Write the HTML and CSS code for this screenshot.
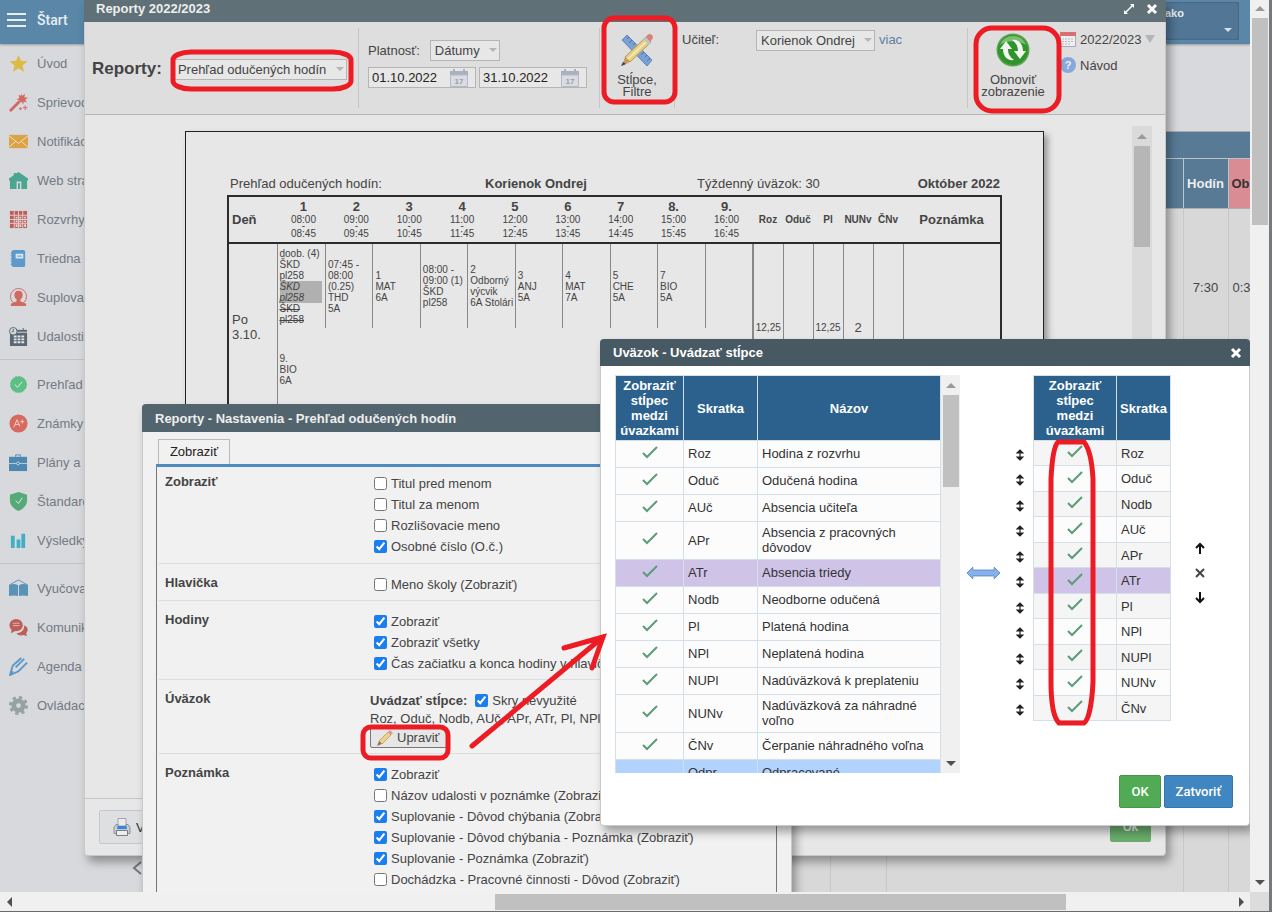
FILE: index.html
```
<!DOCTYPE html>
<html lang="sk">

<head>
	<meta charset="UTF-8">
	<title>Reporty 2022/2023</title>

	<link rel="stylesheet" href="styles.css">
</head>

<body>

	<div class="screen">
		<div class="app">
			<header class="topbar">
				<button class="start"><span class="burger"><i></i><i></i><i></i></span>Štart</button>
				<div class="user">ako<span class="caret"></span></div>
			</header>

			<div class="page">
				<nav class="menu">
					<ul>
						<li><a href="#"><svg viewBox="0 0 20 20"><path fill="#dcba45" d="M10 1l2.600 6.200 6.700.5-5.100 4.300 1.600 6.600-5.800-3.600-5.800 3.600 1.600-6.600L.7 7.700l6.700-.5z"/></svg>Úvod</a></li>
						<li><a href="#"><svg viewBox="0 0 20 20"><path stroke="#d0695f" stroke-width="3" d="M1 19L11 9"/><path fill="#d0695f" d="M13 0l1 3 3-2-1 3.500 4 .5-3 2 2 3-3.500-1-.5 3-2-3-3 2 1-3.500-3-.5 3-2-1-3 3 1z"/><path stroke="#d0695f" d="M17 13v5M14.500 15.500h5M12 15v3M10.500 16.500h3"/></svg>Sprievodca</a></li>
						<li><a href="#"><svg viewBox="0 0 20 20"><path fill="#dba248" d="M0 3h20v14H0z"/><path fill="none" stroke="#f3e3c4" d="M0 4l10 8 10-8M0 16l7-6M20 16l-7-6"/></svg>Notifikácie</a></li>
						<li><a href="#"><svg viewBox="0 0 20 20"><path fill="#4aa591" d="M10 1l10 7v2h-1v9h-6v-8H8v8H1v-9H0V8l5-3.500V2h3v.4z"/><path fill="#4aa591" d="M9.500 13h2v6h-2z"/></svg>Web stránka</a></li>
						<li><a href="#"><svg viewBox="0 0 20 20"><path fill="#bd5f58" d="M1 1h18v18H1z"/><path stroke="#e3cfd0" d="M1 5.500h18M1 10h18M1 14h18M5.500 1v18M10 1v18M14.500 1v18"/><path fill="#ddd" d="M7 7h2v2H7zM11 7h2v2h-2zM16 7h2v2h-2zM7 11h2v2H7zM11 11h2v2h-2zM16 11h2v2h-2zM7 15h2v3H7zM11 15h2v3h-2zM16 15h2v3h-2z"/></svg>Rozvrhy</a></li>
						<li><a href="#"><svg viewBox="0 0 20 20"><rect x="3" y="1" width="14" height="18" rx="2" fill="#5c9acb"/><path fill="#dce6ef" d="M7 5h8v5H7z"/><path stroke="#5c9acb" d="M8.500 7.500h5"/><path stroke="#5c9acb" stroke-width="2" stroke-dasharray="2 1" d="M3 3v14"/></svg>Triedna kniha</a></li>
						<li><a href="#"><svg viewBox="0 0 20 20"><circle cx="10" cy="9" r="8.500" fill="none" stroke="#d0695f"/><path fill="#d0695f" d="M10 3c3 0 4.500 2 4.300 5-.2 2-1 3.500-2.300 4v2l6 2.500V19H2v-2.500L8 14v-2c-1.300-.5-2.100-2-2.300-4C5.500 5 7 3 10 3z"/></svg>Suplovanie</a></li>
						<li><a href="#"><svg viewBox="0 0 20 20"><path fill="#5b6773" d="M1 3h18v17H1z"/><path stroke="#d6d8da" d="M8 5.500h11"/><path fill="#e3e5e7" d="M5 9h3v2H5zM9 9h3v2H9zM13 9h3v2h-3zM5 12h3v2H5zM9 12h3v2H9zM13 12h3v2h-3zM5 15h3v2H5zM9 15h3v2H9zM13 15h3v2h-3z"/><circle cx="4.500" cy="4.500" r="4" fill="#d6d8da" stroke="#5b6773"/><path fill="none" stroke="#5b6773" d="M4.500 2v3H3M15 1v3"/></svg>Udalosti</a></li>
					</ul>
					<ul>
						<li><a href="#"><svg viewBox="0 0 20 20"><circle cx="10" cy="10" r="8.500" fill="#5dbf86" stroke="#5dbf86" stroke-dasharray="2 1"/><path fill="none" stroke="#dff2e6" d="M6 10l3 3 5-6"/></svg>Prehľad</a></li>
						<li><a href="#"><svg viewBox="0 0 20 20"><circle cx="10" cy="10" r="9.500" fill="#d8695f"/><path fill="none" stroke="#f1d2cf" d="M5 14L8.500 6l3 7M6.500 11h4M12 8h4M14 6v4"/></svg>Známky</a></li>
						<li><a href="#"><svg viewBox="0 0 20 20"><path fill="#4e88b0" d="M0 4h19v15H0z"/><path fill="none" stroke="#4e88b0" d="M7 4V2h5v2"/><path stroke="#bed1df" d="M0 11h8M11 11h8"/><circle cx="9.500" cy="11" r="1.500" fill="none" stroke="#bed1df"/></svg>Plány a prípravy</a></li>
						<li><a href="#"><svg viewBox="0 0 20 20"><path fill="#55aa78" d="M10 0l9 3v6c0 5-4 9-9 11C5 18 1 14 1 9V3z"/><path fill="none" stroke="#e0efe6" d="M7 9l3 3 4-6"/></svg>Štandardy</a></li>
						<li><a href="#"><svg viewBox="0 0 20 20"><path fill="#42b0c2" d="M2 5h4v13H2zM8 9h4v9H8zM13 3h4v15h-4z"/></svg>Výsledky</a></li>
					</ul>
					<ul>
						<li><a href="#"><svg viewBox="0 0 20 20"><path fill="none" stroke="#5b92b8" d="M1 6l9-5 9 5"/><path fill="#5b92b8" d="M0 6c4-1 7-1 9.500.5V18C7 17 4 17 0 18zM20 6c-4-1-7-1-9.500.5V18c2.500-1 5.500-1 9.500 0z"/></svg>Vyučovanie</a></li>
						<li><a href="#"><svg viewBox="0 0 20 20"><ellipse cx="7.500" cy="7.500" rx="7" ry="6.500" fill="#bd5f58"/><path fill="#bd5f58" d="M2 16l1-5 5 2zM16 8c5 2 4 6 2 8l1 3-4-1c-3 1-6 0-7-2 5 0 8-3 8-8z"/><path stroke="#e0b9b7" d="M4 5.500h7M4 8h7"/></svg>Komunikácia</a></li>
						<li><a href="#"><svg viewBox="0 0 20 20"><path fill="none" stroke="#5b9ac8" stroke-width="2" d="M13 1L4 9l-3 10 9-4 9-9M16 2l-9 9M1 19l3-4"/></svg>Agenda</a></li>
						<li><a href="#"><svg viewBox="0 0 20 20"><circle cx="10" cy="10" r="5" fill="none" stroke="#96a2a2" stroke-width="5"/><circle cx="10" cy="10" r="8.500" fill="none" stroke="#96a2a2" stroke-width="3" stroke-dasharray="3.400 3.300"/></svg>Ovládací panel</a></li>
					</ul>
					<button class="collapse" aria-label="Zbaliť"><svg viewBox="0 0 10 14"><path fill="none" stroke="#74797f" stroke-width="2" d="M9 1L2 7l7 6"/></svg></button>
				</nav>

				<main class="content">
					<div class="band"></div>
					<table class="absences">
						<colgroup>
							<col>
							<col class="w-mid">
							<col class="w-wide">
							<col class="w-hours">
							<col class="w-period">
						</colgroup>
						<tr>
							<th></th>
							<th></th>
							<th></th>
							<th>Hodín</th>
							<th class="pink">Ob</th>
						</tr>
						<tr class="record">
							<td></td>
							<td></td>
							<td></td>
							<td>7:30</td>
							<td>0:3</td>
						</tr>
						<tr>
							<td></td>
							<td></td>
							<td></td>
							<td></td>
							<td></td>
						</tr>
					</table>
				</main>
			</div>

			<!-- reports window -->
			<section class="window reports">
				<div class="title">
					<h2>Reporty 2022/2023</h2>
					<button aria-label="Zväčšiť"><svg viewBox="0 0 12 12"><path fill="#fff" d="M7 1h4v4L9.500 3.500l-6 6L5 11H1V7l1.500 1.500 6-6z"/></svg></button>
					<button aria-label="Zavrieť"><svg viewBox="0 0 12 12"><path stroke="#fff" stroke-width="3" d="M2 2l8 8M10 2l-8 8"/></svg></button>
				</div>

				<div class="toolbar">
					<div class="group choose">
						<label for="report">Reporty:</label>
						<span class="select"><select id="report">
								<option>Prehľad odučených hodín</option>
							</select></span>
					</div>
					<div class="group dates">
						<div class="line">
							<label for="valid">Platnosť:</label>
							<span class="select"><select id="valid">
									<option>Dátumy</option>
								</select></span>
						</div>
						<div class="line">
							<span class="date"><input type="text" value="01.10.2022" aria-label="Od"><svg viewBox="0 0 20 18"><path fill="#a9b0c0" d="M1 2h18v4H1zM4 0h2v3H4zM14 0h2v3h-2z"/><path fill="#d9dce3" stroke="#b4b9c4" d="M1.500 6h17v11.500h-17z"/><text x="10" y="15">17</text></svg></span>
							<span class="date"><input type="text" value="31.10.2022" aria-label="Do"><svg viewBox="0 0 20 18"><path fill="#a9b0c0" d="M1 2h18v4H1zM4 0h2v3H4zM14 0h2v3h-2z"/><path fill="#d9dce3" stroke="#b4b9c4" d="M1.500 6h17v11.500h-17z"/><text x="10" y="15">17</text></svg></span>
						</div>
					</div>
					<div class="group filters">
						<button class="big"><svg viewBox="0 0 34 34"><path fill="#7ba0d6" stroke="#5f86bf" d="M2 7l5-5 25 25-5 6z"/><path stroke="#4f74ab" d="M9 4L7 6M12 7l-3 3M15 10l-2 2M24 19l-3 3M27 22l-2 2M30 25l-3 3"/><path fill="#e6cf84" stroke="#b29a55" d="M5 24L26 4l5 5-21 20z"/><path stroke="#f4e6b4" stroke-width="2" d="M8 26L27 8"/><path fill="#bcc3cf" d="M23 6l2-2 6 6-2 2z"/><path fill="#dc7f7f" d="M26 3l3-2c3 0 4 2 4 4l-3 4z"/><path fill="#c79c62" d="M5 24l5 5-8 4z"/><path fill="#444" d="M3 29l3 2-5 2z"/></svg>Stĺpce,<br>Filtre</button>
					</div>
					<div class="group teacher">
						<label for="teacher">Učiteľ:</label>
						<span class="select"><select id="teacher">
								<option>Korienok Ondrej</option>
							</select></span>
						<a href="#">viac</a>
					</div>
					<div class="group refresh">
						<button class="big"><svg viewBox="0 0 34 34"><circle cx="17" cy="17" r="16.500" fill="#5aa350"/><circle cx="17" cy="17" r="15" fill="#2f9429"/><path fill="#9ccf92" opacity=".7" d="M4 12C8 0 26 0 30 12c-7-5-19-5-26 0z"/><path fill="#f2f5f1" d="M4 16l6-8 6 8h-4c0 5 2 8 6 11-7 1-11-4-11-11zM30 18l-6 8-6-8h4c0-5-2-8-6-11 7-1 11 4 11 11z"/></svg>Obnoviť<br>zobrazenie</button>
						<div class="links">
							<button><svg viewBox="0 0 16 16"><path fill="#eee" stroke="#aab" d="M.5 2.500h15v13H.5z"/><path fill="#d8706f" d="M0 1h16v4H0z"/><path stroke="#b8bcc4" stroke-dasharray="2 1" d="M2 8h12M2 10.500h12M2 13h9"/></svg>2022/2023<span class="down"></span></button>
							<a href="#"><svg viewBox="0 0 16 16"><circle cx="8" cy="8" r="8" fill="#86a9dc"/><text x="8" y="12">?</text></svg>Návod</a>
						</div>
					</div>
				</div>

				<div class="preview">
					<div class="paper">
						<div class="heading">
							<span>Prehľad odučených hodín:</span>
							<b>Korienok Ondrej</b>
							<span>Týždenný úväzok: 30</span>
							<b>Október 2022</b>
						</div>
						<table class="hours">
							<colgroup>
								<col class="w-day">
								<col span="9">
								<col span="5" class="w-sum">
								<col class="w-note">
							</colgroup>
							<tr>
								<th class="day">Deň</th>
								<th>1<small>08:00<i>-</i>08:45</small></th>
								<th>2<small>09:00<i>-</i>09:45</small></th>
								<th>3<small>10:00<i>-</i>10:45</small></th>
								<th>4<small>11:00<i>-</i>11:45</small></th>
								<th>5<small>12:00<i>-</i>12:45</small></th>
								<th>6<small>13:00<i>-</i>13:45</small></th>
								<th>7<small>14:00<i>-</i>14:45</small></th>
								<th>8.<small>15:00<i>-</i>15:45</small></th>
								<th>9.<small>16:00<i>-</i>16:45</small></th>
								<th class="sum">Roz</th>
								<th class="sum">Oduč</th>
								<th class="sum">Pl</th>
								<th class="sum">NUNv</th>
								<th class="sum">ČNv</th>
								<th>Poznámka</th>
							</tr>
							<tr>
								<td class="day">Po<br>3.10.</td>
								<td colspan="9" class="lessons">
									<div class="row">
										<div>doob. (4)<br>ŠKD<br>pl258<em>ŠKD<br>pl258</em><s>ŠKD<br>pl258</s></div>
										<div>07:45 -<br>08:00<br>(0.25)<br>THD<br>5A</div>
										<div>1<br>MAT<br>6A</div>
										<div>08:00 -<br>09:00 (1)<br>ŠKD<br>pl258</div>
										<div>2<br>Odborný<br>výcvik<br>6A Stolári</div>
										<div>3<br>ANJ<br>5A</div>
										<div>4<br>MAT<br>7A</div>
										<div>5<br>CHE<br>5A</div>
										<div>7<br>BIO<br>5A</div>
										<div></div>
									</div>
									<div class="row last">
										<div>9.<br>BIO<br>6A</div>
									</div>
								</td>
								<td class="first">12,25</td>
								<td></td>
								<td>12,25</td>
								<td class="large">2</td>
								<td></td>
								<td></td>
							</tr>
						</table>
					</div>
					<div class="scroll">
						<span class="up"></span>
						<span class="thumb"></span>
					</div>
				</div>

				<div class="footer">
					<button class="print"><svg viewBox="0 0 18 18"><path fill="#e9ebee" stroke="#a3a7ad" d="M5 .5h8V8H5z"/><path fill="#c9ccd1" stroke="#8c9097" d="M3 6.500h2V10h8V6.500h2l2 3v6H1v-6z"/><path fill="#3585e0" d="M5 8l8 0 1 3H4z"/><path fill="#eee" stroke="#777b82" d="M3.500 12.500h11v5h-11z"/></svg>Vytlačiť</button>
					<button class="ok">Ok</button>
				</div>
			</section>

			<!-- settings window -->
			<section class="window settings">
				<div class="title">
					<h2>Reporty - Nastavenia - Prehľad odučených hodín</h2>
				</div>
				<div class="tabs"><button>Zobraziť</button></div>
				<div class="options">
					<fieldset>
						<legend>Zobraziť</legend>
						<div>
							<label><input type="checkbox">Titul pred menom</label>
							<label><input type="checkbox">Titul za menom</label>
							<label><input type="checkbox">Rozlišovacie meno</label>
							<label><input type="checkbox" checked>Osobné číslo (O.č.)</label>
						</div>
					</fieldset>
					<fieldset>
						<legend>Hlavička</legend>
						<div>
							<label><input type="checkbox">Meno školy (Zobraziť)</label>
						</div>
					</fieldset>
					<fieldset>
						<legend>Hodiny</legend>
						<div>
							<label><input type="checkbox" checked>Zobraziť</label>
							<label><input type="checkbox" checked>Zobraziť všetky</label>
							<label><input type="checkbox" checked>Čas začiatku a konca hodiny v hlavičke</label>
						</div>
					</fieldset>
					<fieldset>
						<legend>Úväzok</legend>
						<div class="columns">
							<label><b>Uvádzať stĺpce:</b> <input type="checkbox" checked>Skry nevyužité</label>
							<p>Roz, Oduč, Nodb, AUč, APr, ATr, Pl, NPl, NUPl</p>
							<button><svg viewBox="0 0 16 16"><path fill="#ecd28a" stroke="#c3a866" d="M2 11L11 2l3 3-9 9z"/><path fill="#d99a9a" d="M11 2l2-2 3 3-2 2z"/><path fill="#8c7a5c" d="M2 11l3 3-5 2z"/></svg>Upraviť</button>
						</div>
					</fieldset>
					<fieldset>
						<legend>Poznámka</legend>
						<div>
							<label><input type="checkbox" checked>Zobraziť</label>
							<label><input type="checkbox">Názov udalosti v poznámke (Zobraziť)</label>
							<label><input type="checkbox" checked>Suplovanie - Dôvod chýbania (Zobraziť)</label>
							<label><input type="checkbox" checked>Suplovanie - Dôvod chýbania - Poznámka (Zobraziť)</label>
							<label><input type="checkbox" checked>Suplovanie - Poznámka (Zobraziť)</label>
							<label><input type="checkbox">Dochádzka - Pracovné činnosti - Dôvod (Zobraziť)</label>
						</div>
					</fieldset>
				</div>
			</section>

			<!-- column picker window -->
			<section class="window picker">
				<div class="title">
					<h2>Uväzok - Uvádzať stĺpce</h2>
					<button aria-label="Zavrieť"><svg viewBox="0 0 12 12"><path stroke="#fff" stroke-width="3" d="M2 2l8 8M10 2l-8 8"/></svg></button>
				</div>
				<div class="lists">
					<div class="available">
						<table>
							<thead>
								<tr>
									<th class="w-check">Zobraziť stĺpec medzi úvazkami</th>
									<th class="w-short">Skratka</th>
									<th>Názov</th>
								</tr>
							</thead>
							<tbody>
								<tr><td class="tick"></td><td>Roz</td><td>Hodina z rozvrhu</td></tr>
								<tr><td class="tick"></td><td>Oduč</td><td>Odučená hodina</td></tr>
								<tr><td class="tick"></td><td>AUč</td><td>Absencia učiteľa</td></tr>
								<tr><td class="tick"></td><td>APr</td><td>Absencia z pracovných dôvodov</td></tr>
								<tr class="selected"><td class="tick"></td><td>ATr</td><td>Absencia triedy</td></tr>
								<tr><td class="tick"></td><td>Nodb</td><td>Neodborne odučená</td></tr>
								<tr><td class="tick"></td><td>Pl</td><td>Platená hodina</td></tr>
								<tr><td class="tick"></td><td>NPl</td><td>Neplatená hodina</td></tr>
								<tr><td class="tick"></td><td>NUPl</td><td>Nadúväzková k preplateniu</td></tr>
								<tr><td class="tick"></td><td>NUNv</td><td>Nadúväzková za náhradné voľno</td></tr>
								<tr><td class="tick"></td><td>ČNv</td><td>Čerpanie náhradného voľna</td></tr>
								<tr class="marked"><td></td><td>Odpr</td><td>Odpracované</td></tr>
							</tbody>
						</table>
						<div class="scroll">
							<span class="up"></span>
							<span class="thumb"></span>
							<span class="down"></span>
						</div>
					</div>

					<button class="swap" aria-label="Presunúť"><svg viewBox="0 0 36 14"><path fill="#86b1ec" stroke="#5f8ccb" d="M1 7l6-6v3h22V1l6 6-6 6v-3H7v3z"/></svg></button>

					<table class="chosen">
						<thead>
							<tr>
								<th class="move"></th>
								<th class="w-wide">Zobraziť stĺpec medzi úvazkami</th>
								<th class="w-name">Skratka</th>
							</tr>
						</thead>
						<tbody>
							<tr><td class="move"></td><td class="tick"></td><td>Roz</td></tr>
							<tr><td class="move"></td><td class="tick"></td><td>Oduč</td></tr>
							<tr><td class="move"></td><td class="tick"></td><td>Nodb</td></tr>
							<tr><td class="move"></td><td class="tick"></td><td>AUč</td></tr>
							<tr><td class="move"></td><td class="tick"></td><td>APr</td></tr>
							<tr class="selected"><td class="move"></td><td class="tick"></td><td>ATr</td></tr>
							<tr><td class="move"></td><td class="tick"></td><td>Pl</td></tr>
							<tr><td class="move"></td><td class="tick"></td><td>NPl</td></tr>
							<tr><td class="move"></td><td class="tick"></td><td>NUPl</td></tr>
							<tr><td class="move"></td><td class="tick"></td><td>NUNv</td></tr>
							<tr><td class="move"></td><td class="tick"></td><td>ČNv</td></tr>
						</tbody>
					</table>

					<div class="order">
						<button aria-label="Hore"><svg viewBox="0 0 12 12"><path fill="none" stroke="#111" stroke-width="2" d="M6 12V2M2 6l4-4 4 4"/></svg></button>
						<button aria-label="Odstrániť"><svg viewBox="0 0 12 12"><path stroke="#444" stroke-width="2" d="M2 2l8 8M10 2l-8 8"/></svg></button>
						<button aria-label="Dole"><svg viewBox="0 0 12 12"><path fill="none" stroke="#111" stroke-width="2" d="M6 0v10M2 6l4 4 4-4"/></svg></button>
					</div>
				</div>
				<div class="actions">
					<button class="green">OK</button>
					<button class="blue">Zatvoriť</button>
				</div>
			</section>

			<!-- red marks -->
			<svg class="marks" width="1250" height="892">
				<rect x="173" y="52" width="178" height="37" rx="18" ry="8"/>
				<rect x="604" y="18" width="71" height="84" rx="10"/>
				<rect x="976" y="28" width="83" height="83" rx="16"/>
				<rect x="363" y="727" width="85" height="31" rx="8"/>
				<path d="M1058 442h26c5 6 8 18 9 37v203c-1 20-4 38-9 41h-25c-5-5-8-20-8-41V479c1-21 3-33 7-37z"/>
				<path stroke-linecap="round" d="M472 746L603 637M564 648l39-11-11 31"/>
			</svg>
		</div>

		<div class="bar vertical">
			<span class="up"></span>
			<span class="thumb"></span>
			<span class="down"></span>
		</div>
		<div class="bar horizontal">
			<span class="left"></span>
			<span class="thumb"></span>
			<span class="right"></span>
		</div>
		<div class="corner"></div>
	</div>

</body>

</html>
```
FILE: styles.css
```
* {
	box-sizing: border-box;
}

body {
	margin: 0;
	font: 13px/15px "Liberation Sans", Arial, sans-serif;
	color: #444;
}

button {
	margin: 0;
	padding: 0;
	border: 0;
	background: none;
	font: inherit;
	color: inherit;
}

a {
	color: inherit;
	text-decoration: none;
}

h2,
p {
	margin: 0;
}

ul {
	margin: 0;
	padding: 0;
	list-style: none;
}

table {
	border-collapse: collapse;
	table-layout: fixed;
}

.screen {
	display: grid;
	grid-template-columns: 1fr 19px;
	grid-template-rows: 1fr 19px;
	height: 100vh;
	overflow: hidden;
	border-right: 3px solid #77797c;
	border-bottom: 1px solid #6b6b6b;
}

.app {
	position: relative;
	display: flex;
	flex-direction: column;
	overflow: hidden;
	background-color: #d7d9dc;
}

/* page behind the windows */
.topbar {
	display: flex;
	justify-content: space-between;
	height: 44px;
	background-color: #5a87a7;
	box-shadow: 0 1px 2px #999;
	color: #e8eef2;
}

.start {
	display: flex;
	align-items: center;
	gap: 11px;
	padding: 0 0 5px 7px;
	font: 500 14px/16px Roboto, sans-serif;
}

.burger {
	display: flex;
	flex-direction: column;
	gap: 4px;
}

.burger i {
	width: 19px;
	height: 2px;
	background-color: #e8eef2;
}

.user {
	display: flex;
	flex-direction: column;
	width: 120px;
	height: 38px;
	margin: 2px 11px;
	padding: 4px 7px 8px 46px;
	border-radius: 2px;
	background-color: #527696;
	box-shadow: inset 0 0 2px #345;
	font-size: 11px;
	font-weight: bold;
}

.caret {
	margin: auto 0 0 auto;
	border: 4px solid transparent;
	border-top-color: #d8dfe5;
	border-bottom: 0;
}

.page {
	display: flex;
	flex: 1;
}

.menu {
	display: flex;
	flex-direction: column;
	width: 142px;
	color: #747a83;
}

.menu ul {
	padding: 5px 0 3px;
	border-bottom: 1px solid #c0c2c6;
}

.menu ul:first-child {
	padding-top: 0;
}

.menu ul:last-of-type {
	border: 0;
}

.menu a {
	display: flex;
	align-items: center;
	gap: 9px;
	height: 39px;
	padding-left: 9px;
	white-space: nowrap;
	overflow: hidden;
}

.menu a svg {
	flex: none;
	width: 19px;
	height: 19px;
}

.collapse {
	margin: auto 0 17px auto;
}

.collapse svg {
	display: block;
	width: 10px;
	height: 14px;
}

.content {
	display: flex;
	flex-direction: column;
	flex: 1;
	min-width: 0;
	padding-top: 87px;
}

.band {
	height: 27px;
	border-top: 1px solid #aaa;
	background-color: #587a95;
}

.absences {
	width: 100%;
	height: 734px;
	background-color: #d8d8d8;
	text-align: center;
}

.absences th {
	height: 50px;
	padding: 0;
	border-left: 1px solid #b9c5cc;
	border-top: 1px solid #b9c5cc;
	border-bottom: 1px solid #b0b0b0;
	background-color: #587a95;
	color: #eee;
}

.absences th.pink {
	background-color: #d98c93;
	color: #333;
	text-align: left;
	padding-left: 3px;
}

.absences td {
	padding: 0 0 0 4px;
	border-left: 1px solid #c3cacd;
	white-space: nowrap;
}

.absences td:nth-child(4) {
	padding: 0;
}

.absences .record {
	height: 158px;
}

.absences .w-mid {
	width: 56px;
}

.absences .w-wide {
	width: 297px;
}

.absences .w-hours {
	width: 45px;
}

.absences .w-period {
	width: 22px;
}

/* windows */
.window {
	position: absolute;
	display: flex;
	flex-direction: column;
	border: 1px solid #c9c9c9;
	border-top: 0;
	border-radius: 4px;
	box-shadow: 4px 6px 10px rgba(0, 0, 0, .35);
}

.title {
	display: flex;
	align-items: center;
	gap: 11px;
	height: 28px;
	margin: 0 -1px;
	padding: 0 8px 0 13px;
	border-radius: 4px 4px 0 0;
	background-color: #52646d;
	color: #eee;
}

.title h2 {
	flex: 1;
	font-size: 13px;
	line-height: 15px;
}

.title svg {
	display: block;
	width: 12px;
	height: 12px;
}

.reports {
	left: 84px;
	right: 84px;
	top: 0;
	bottom: 36px;
	background-color: #e7e7e7;
}

.reports > .title {
	height: 22px;
	padding: 0 8px 5px 12px;
	border-radius: 0;
	background-color: #5f7077;
}

.toolbar {
	display: flex;
	height: 93px;
	padding: 6px 0;
	border-bottom: 1px solid #b5b5b5;
	background-color: #dedede;
}

.group {
	padding: 2px 0 0 7px;
	border-left: 1px solid #c6c6c6;
}

.select {
	position: relative;
	display: inline-flex;
}

.select::after {
	content: "";
	position: absolute;
	right: 3px;
	top: 8px;
	border: 4px solid transparent;
	border-top-color: #b5b5b5;
	border-bottom: 0;
}

select {
	appearance: none;
	width: 100%;
	height: 21px;
	padding: 0 4px;
	border: 1px solid #b5b5b5;
	border-radius: 0;
	background-color: #e7e7e7;
	font: inherit;
	color: #444;
}

.choose {
	display: flex;
	align-items: center;
	gap: 11px;
	width: 273px;
	border: 0;
}

.choose label {
	font-size: 17px;
	font-weight: bold;
	line-height: 20px;
}

.choose .select {
	width: 174px;
}

.dates {
	width: 241px;
	padding-left: 9px;
}

.dates .line {
	display: flex;
	align-items: center;
	gap: 3px;
	padding-top: 6px;
}

.dates .line:first-child {
	gap: 10px;
	padding-top: 10px;
}

.dates .line .select {
	width: 70px;
}

.date {
	display: flex;
	align-items: center;
	width: 108px;
	height: 21px;
	padding: 0 6px 0 3px;
	border: 1px solid #b5b5b5;
	background-color: #e7e7e7;
}

.date input {
	flex: 1;
	min-width: 0;
	padding: 0;
	border: 0;
	background: none;
	font: inherit;
	color: #222;
}

.date svg {
	width: 20px;
	height: 18px;
}

.date text {
	font-size: 8px;
	font-weight: bold;
	fill: #9aa0ae;
	text-anchor: middle;
}

.filters {
	width: 75px;
}

.big {
	display: block;
	padding-top: 2px;
	line-height: 12px;
	text-align: center;
}

.big svg {
	display: block;
	width: 34px;
	height: 34px;
	margin: 1px auto 7px;
}

.filters .big {
	width: 60px;
}

.teacher {
	flex: 1;
	display: flex;
	align-items: flex-start;
}

.teacher label {
	width: 74px;
	padding-top: 2px;
}

.teacher .select {
	width: 119px;
}

.teacher a {
	padding: 2px 0 0 4px;
	color: #5c7fa3;
}

.refresh {
	display: flex;
	align-items: flex-start;
	gap: 8px;
	width: 198px;
	padding-left: 12px;
}

.refresh .big {
	width: 66px;
}

.links {
	display: flex;
	flex-direction: column;
	gap: 10px;
	padding: 1px 0 0 6px;
}

.links > * {
	display: flex;
	align-items: center;
	gap: 4px;
	height: 16px;
}

.links svg {
	width: 16px;
	height: 16px;
}

.links text {
	font-size: 11px;
	font-weight: bold;
	fill: #eee;
	text-anchor: middle;
}

.links .down {
	border: 5px solid transparent;
	border-top: 8px solid #b5b5b5;
	border-bottom: 0;
}

.preview {
	display: flex;
	flex: 1;
	min-height: 0;
	padding: 11px 13px 0 100px;
}

.paper {
	flex: 1;
	margin: 5px 88px 0 0;
	padding: 44px 41px;
	border: 1px solid #222;
	box-shadow: 4px 4px 6px #999;
}

.heading {
	display: flex;
	padding: 0 2px 4px 3px;
}

.heading span:first-child {
	width: 255px;
}

.heading b {
	width: 212px;
}

.heading b:last-child {
	flex: 1;
	text-align: right;
}

.hours {
	width: 100%;
	border: 2px solid #2c2c2c;
	font-size: 10px;
	line-height: 11px;
}

.w-day {
	width: 49px;
}

.w-sum {
	width: 30px;
}

.w-note {
	width: 98px;
}

.hours th {
	height: 47px;
	padding: 0;
	border-bottom: 2px solid #2c2c2c;
	font-size: 13px;
	line-height: 15px;
}

.hours .day {
	padding-left: 3px;
	font-size: 13px;
	line-height: 15px;
	text-align: left;
}

.hours th.sum {
	font-size: 10px;
}

.hours small {
	display: block;
	font-size: 10px;
	font-weight: normal;
	line-height: 11px;
	padding-bottom: 2px;
}

/* dash between the two times */
.hours i {
	display: block;
	height: 3px;
	font-style: normal;
	line-height: 2px;
}

.hours td {
	padding: 0;
	border-left: 1px solid #888;
	text-align: center;
}

.hours td:first-child {
	border: 0;
}

.hours td.first {
	border-left: 2px solid #888;
}

.hours td.large {
	font-size: 13px;
}

.hours td.lessons {
	text-align: left;
}

.row {
	display: grid;
	grid-template-columns: repeat(10, 1fr);
	height: 84px;
}

.row div {
	display: grid;
	align-content: center;
	min-width: 0;
	padding-left: 2px;
	border-left: 1px solid #888;
	white-space: nowrap;
}

.row div:first-child {
	border: 0;
}

.row.last {
	height: 82px;
}

.row em {
	margin-right: 3px;
	background-color: #b0b0b0;
}

.scroll {
	display: flex;
	flex-direction: column;
	align-items: center;
	flex: none;
	width: 20px;
	background-color: #dadada;
}

.thumb {
	width: 16px;
	background-color: #b6b6b6;
}

.scroll .up,
.bar .up {
	margin: 8px 0 7px;
	border: 5px solid transparent;
	border-top: 0;
	border-bottom-color: #9a9a9a;
}

.scroll .down,
.bar .down {
	margin: auto 0 7px;
	border: 5px solid transparent;
	border-bottom: 0;
	border-top-color: #505050;
}

.scroll .thumb {
	height: 101px;
}

.footer {
	display: flex;
	justify-content: space-between;
	align-items: flex-start;
	height: 57px;
	padding: 11px 14px 12px;
	border-top: 1px solid #c4c4c4;
}

.print {
	display: flex;
	align-items: center;
	gap: 5px;
	height: 34px;
	padding: 0 13px;
	border: 1px solid #c4c7cb;
	border-radius: 2px;
	background-color: #dddfe1;
	color: #333;
}

.print svg {
	width: 18px;
	height: 18px;
}

.ok {
	width: 41px;
	height: 32px;
	border-radius: 2px;
	background-color: #69ad6b;
	color: #eee;
	font-family: Roboto, sans-serif;
	font-weight: 500;
}

.settings {
	left: 142px;
	top: 404px;
	width: 650px;
	padding-bottom: 40px;
	background-color: #f1f1f1;
}

.tabs {
	margin: 7px 14px 0 13px;
	padding-left: 2px;
	border-bottom: 3px solid #4e8cbf;
}

.tabs button {
	display: block;
	width: 72px;
	height: 25px;
	padding-bottom: 1px;
	border: 1px solid #bbb;
	border-bottom: 0;
	color: #222;
}

.options {
	margin: 0 14px 0 13px;
	padding: 0 3px 20px 2px;
	border: 1px solid #777;
	border-top: 0;
}

fieldset {
	display: flex;
	margin: 0;
	padding: 10px 0 5px;
	border: 0;
	border-bottom: 1px solid #ddd;
}

fieldset:first-child {
	padding: 6px 0;
}

legend {
	float: left;
	width: 211px;
	padding: 0 0 0 6px;
	font-weight: 700;
	line-height: 17px;
}

fieldset label {
	display: flex;
	align-items: center;
	height: 21px;
	white-space: nowrap;
}

input[type="checkbox"] {
	width: 13px;
	height: 13px;
	margin: 0 4px;
	accent-color: #1a7df0;
}

.columns input[type="checkbox"] {
	margin-left: 8px;
}

.columns p {
	line-height: 16px;
	white-space: nowrap;
}

.columns button {
	display: flex;
	align-items: center;
	gap: 4px;
	height: 21px;
	padding: 0 8px 0 6px;
	border: 1px solid #777;
	border-radius: 2px;
	background-color: #e6e6e6;
}

.columns svg {
	width: 16px;
	height: 16px;
}

.picker {
	right: 0;
	top: 339px;
	width: 650px;
	background-color: #fff;
	color: #333;
}

.picker > .title {
	height: 27px;
	background-color: #475963;
	color: #fff;
}

.lists {
	display: flex;
	padding: 9px 14px 0;
}

.available {
	display: flex;
	align-items: flex-start;
	width: 345px;
	height: 398px;
	overflow: hidden;
}

.available table {
	width: 326px;
}

.available .scroll,
.bar {
	background-color: #f0f0f0;
}

.available .scroll {
	width: 19px;
	height: 398px;
}

.available .thumb {
	height: 92px;
}

.available .thumb,
.bar .thumb {
	background-color: #c0c0c0;
}

.picker th {
	height: 65px;
	padding: 2px;
	border: 1px solid #d4dfe7;
	background-color: #2b618c;
	color: #fff;
}

.picker td {
	height: 27px;
	padding: 0 4px;
	border: 1px solid #d4dfe7;
	background-color: #fcfcfc;
}

.available td {
	padding: 3px 4px 4px;
}

.picker .selected td {
	background-color: #cfc3e8;
}

.picker .marked td {
	background-color: #b3d3ff;
}

.w-check {
	width: 68px;
}

.w-short {
	width: 74px;
}

td.tick {
	text-align: center;
}

td.tick::before {
	content: "";
	display: block;
	width: 16px;
	height: 13px;
	margin: 0 auto 3px;
	background: url("data:image/svg+xml,%3Csvg xmlns='http://www.w3.org/2000/svg' viewBox='0 0 16 13'%3E%3Cpath d='M1 7l4 4L15 1' fill='none' stroke='%235c9c76' stroke-width='2'/%3E%3C/svg%3E");
}

.swap {
	width: 35px;
	margin: 0 11px 3px 6px;
}

.swap svg {
	display: block;
	width: 35px;
	height: 14px;
}

.chosen {
	width: 159px;
	align-self: flex-start;
}

.picker .chosen td {
	height: 26px;
}

.picker .chosen tr:nth-child(odd) td {
	height: 25px;
}

.picker .chosen tr:nth-child(odd):not(.selected) td:not(.move) {
	background-color: #f5f5f5;
}

.picker .chosen th.w-wide {
	width: 83px;
	padding: 2px 9px;
}

.chosen .w-name {
	width: 54px;
}

.picker .chosen .move {
	padding: 3px 0 0;
	border: 0;
	background: none;
}

td.move::before {
	content: "";
	display: block;
	width: 8px;
	height: 12px;
	margin-left: 4px;
	background: url("data:image/svg+xml,%3Csvg xmlns='http://www.w3.org/2000/svg' viewBox='0 0 8 12'%3E%3Cpath d='M4 2v8M1 4l3-3 3 3zM1 8l3 3 3-3z' fill='%23222' stroke='%23222' stroke-width='1.200'/%3E%3C/svg%3E");
}

.order {
	display: flex;
	flex-direction: column;
	justify-content: center;
	gap: 13px;
	margin-left: 23px;
	padding-bottom: 3px;
}

.order svg {
	display: block;
	width: 12px;
	height: 12px;
}

.actions {
	display: flex;
	justify-content: flex-end;
	gap: 3px;
	padding: 2px 16px 17px;
}

.actions button {
	height: 33px;
	padding: 0 11px;
	border: 1px solid #449648;
	border-radius: 2px;
	background-color: #50ab54;
	color: #fff;
	font-family: Roboto, sans-serif;
	font-weight: 500;
}

.actions .blue {
	border-color: #3675ad;
	background-color: #4086c1;
}

.marks {
	position: absolute;
	left: 0;
	top: 0;
	fill: none;
	stroke: #ed1c24;
	stroke-width: 5px;
	pointer-events: none;
}

/* browser scrollbars */
.bar {
	display: flex;
	align-items: center;
}

.vertical {
	flex-direction: column;
}

.vertical .up {
	margin: 6px 0 7px;
}

.vertical .thumb {
	height: 207px;
}

.horizontal .thumb {
	width: 571px;
	height: 16px;
	margin-left: 483px;
}

.horizontal .left,
.horizontal .right {
	border: 5px solid transparent;
	border-left: 0;
	border-right-color: #505050;
	margin-left: 7px;
}

.horizontal .right {
	border: 5px solid transparent;
	border-right: 0;
	border-left-color: #505050;
	margin: 0 6px 0 auto;
}

.corner {
	background-color: #dcdcdc;
}
```
